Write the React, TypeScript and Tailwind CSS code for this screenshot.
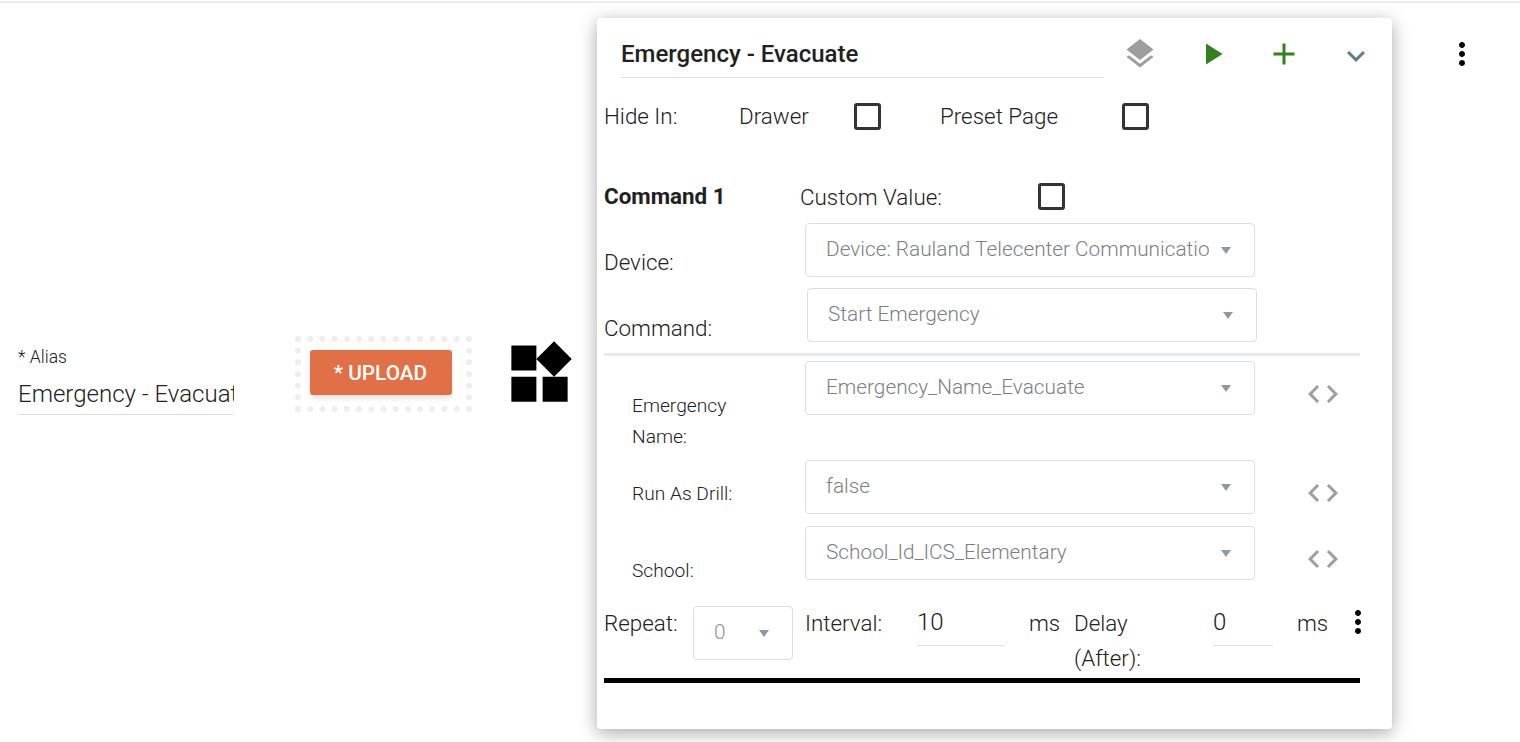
import { MdAdd, MdCode, MdExpandMore, MdLayers, MdMoreVert, MdPlayArrow, MdWidgets } from "react-icons/md";

function Checkbox() {
  return <div className="h-[27px] w-[27px] rounded-[3px] border-[3px] border-[#333333] bg-white" />;
}

function Caret() {
  return (
    <svg width="10" height="7" viewBox="0 0 10 7" className="shrink-0">
      <path d="M0 0h10L5 7z" fill="#8f999f" />
    </svg>
  );
}

function SelectBox({ value }: { value: string }) {
  return (
    <div className="flex h-[54px] w-[450px] shrink-0 items-center rounded-[4px] border border-[#dcdfe1] pl-[20px] pr-[23px]">
      <div className="min-w-0 flex-1 overflow-hidden whitespace-nowrap text-[20.8px] font-light text-[#7b7f82]">{value}</div>
      <div className="ml-[12px]">
        <Caret />
      </div>
    </div>
  );
}

function ParamRow({ label, value, height, labelTop }: { label: string; value: string; height: string; labelTop: string }) {
  return (
    <div className={`flex items-start pl-[35px] ${height}`}>
      <div className={`w-[173px] shrink-0 text-[19.2px] font-light leading-[31px] ${labelTop}`}>{label}</div>
      <SelectBox value={value} />
      <MdCode className="ml-[50px] mt-[15px] shrink-0 text-[#9e9e9e]" size={36} />
    </div>
  );
}

export default function App() {
  return (
    <div className="h-[742px] w-full overflow-hidden bg-white pt-[1px] font-[Roboto,sans-serif] text-[#212121]">
      <div className="h-[2px] bg-[#e9edf1]" />
      <div className="flex items-start pl-[18px] pt-[15px]">
        {/* alias */}
        <div className="mt-[329px] w-[216px] shrink-0">
          <div className="text-[17.6px] font-light leading-[20px]">* Alias</div>
          <input
            readOnly
            value="Emergency - Evacuate"
            className="h-[48px] w-full border-b border-[#dfdfe2] bg-transparent pt-[7px] text-[24px] font-light outline-none"
          />
        </div>

        {/* upload */}
        <div className="ml-[61px] mt-[318px] flex h-[76px] w-[177px] shrink-0 items-center justify-center border-[6px] border-dotted border-[#eeeeee]">
          <button className="mb-[4px] mr-[6px] h-[45px] w-[142px] rounded-[3px] bg-[#e27046] pt-[3px] text-[20.8px] font-medium text-white shadow-md">* UPLOAD</button>
        </div>

        <MdWidgets className="ml-[30px] mt-[318px] shrink-0 text-black" size={75} />

        {/* preset card */}
        <div className="ml-[20px] h-[711px] w-[795px] shrink-0 rounded-[4px] bg-white shadow-[0_4px_18px_rgba(0,0,0,0.35)]">
          <div className="ml-[24px] mt-[12px] flex items-center">
            <div className="flex h-[48px] w-[483px] items-center border-b border-[#dfdfe2] pt-[1px] text-[24px] font-medium">Emergency - Evacuate</div>
            <MdLayers className="ml-[18px] text-[#9e9e9e]" size={36} />
            <MdPlayArrow className="ml-[36px] text-[#33801f]" size={36} />
            <MdAdd className="ml-[36px] text-[#33801f]" size={36} />
            <MdExpandMore className="ml-[36px] mt-[4px] text-[#607d8b]" size={36} />
          </div>

          <div className="mt-[25px] flex h-[27px] items-center pl-[7px] text-[22.4px] font-light">
            <div className="w-[135px]">Hide In:</div>
            <div className="w-[115px]">Drawer</div>
            <Checkbox />
            <div className="ml-[59px] w-[182px]">Preset Page</div>
            <Checkbox />
          </div>

          <div className="mt-[53px] flex h-[27px] items-center pl-[7px] text-[22.4px]">
            <div className="w-[196px] font-bold">Command 1</div>
            <div className="w-[238px] pt-[2px] font-light">Custom Value:</div>
            <Checkbox />
          </div>

          <div className="mt-[13px] flex h-[54px] items-start pl-[7px]">
            <div className="w-[201px] pt-[26px] text-[22.4px] font-light leading-[26px]">Device:</div>
            <SelectBox value="Device: Rauland Telecenter Communications" />
          </div>

          <div className="mt-[11px] flex h-[54px] items-start pl-[7px]">
            <div className="w-[203px] pt-[27px] text-[22.4px] font-light leading-[26px]">Command:</div>
            <SelectBox value="Start Emergency" />
          </div>

          <div className="ml-[7px] mt-[11px] h-[3px] w-[756px] bg-[#e8ebee]" />

          <div className="mt-[5px]">
            <ParamRow label="Emergency Name:" value="Emergency_Name_Evacuate" height="h-[99px]" labelTop="pt-[29px] pr-[60px]" />
            <ParamRow label="Run As Drill:" value="false" height="h-[66px]" labelTop="pt-[18px]" />
            <ParamRow label="School:" value="School_Id_ICS_Elementary" height="h-[78px]" labelTop="pt-[29px]" />
          </div>

          <div className="flex h-[74px] items-start pl-[7px] text-[22.4px] font-light leading-[35px]">
            <div className="w-[89px] pt-[2px]">Repeat:</div>
            <div className="mt-[2px] flex h-[54px] w-[100px] shrink-0 items-center rounded-[4px] border border-[#dcdfe1] pl-[20px]">
              <div className="w-[45px] pb-[2px] text-[20.8px] text-[#8c9093]">0</div>
              <Caret />
            </div>
            <div className="ml-[12px] w-[112px] pt-[2px]">Interval:</div>
            <input readOnly value="10" className="h-[42px] w-[88px] border-b border-[#e2e2e4] bg-transparent pb-[5px] text-[24px] font-light outline-none" />
            <div className="ml-[24px] w-[45px] pt-[2px]">ms</div>
            <div className="w-[139px] pr-[50px] pt-[2px]">Delay (After):</div>
            <input readOnly value="0" className="h-[42px] w-[60px] border-b border-[#e2e2e4] bg-transparent pb-[5px] text-[24px] font-light outline-none" />
            <div className="ml-[24px] w-[43px] pt-[2px]">ms</div>
            <MdMoreVert className="shrink-0 text-black" size={36} />
          </div>

          <div className="ml-[7px] h-[5px] w-[756px] bg-black" />
        </div>

        <MdMoreVert className="ml-[52px] mt-[18px] shrink-0 text-black" size={36} />
      </div>
    </div>
  );
}
